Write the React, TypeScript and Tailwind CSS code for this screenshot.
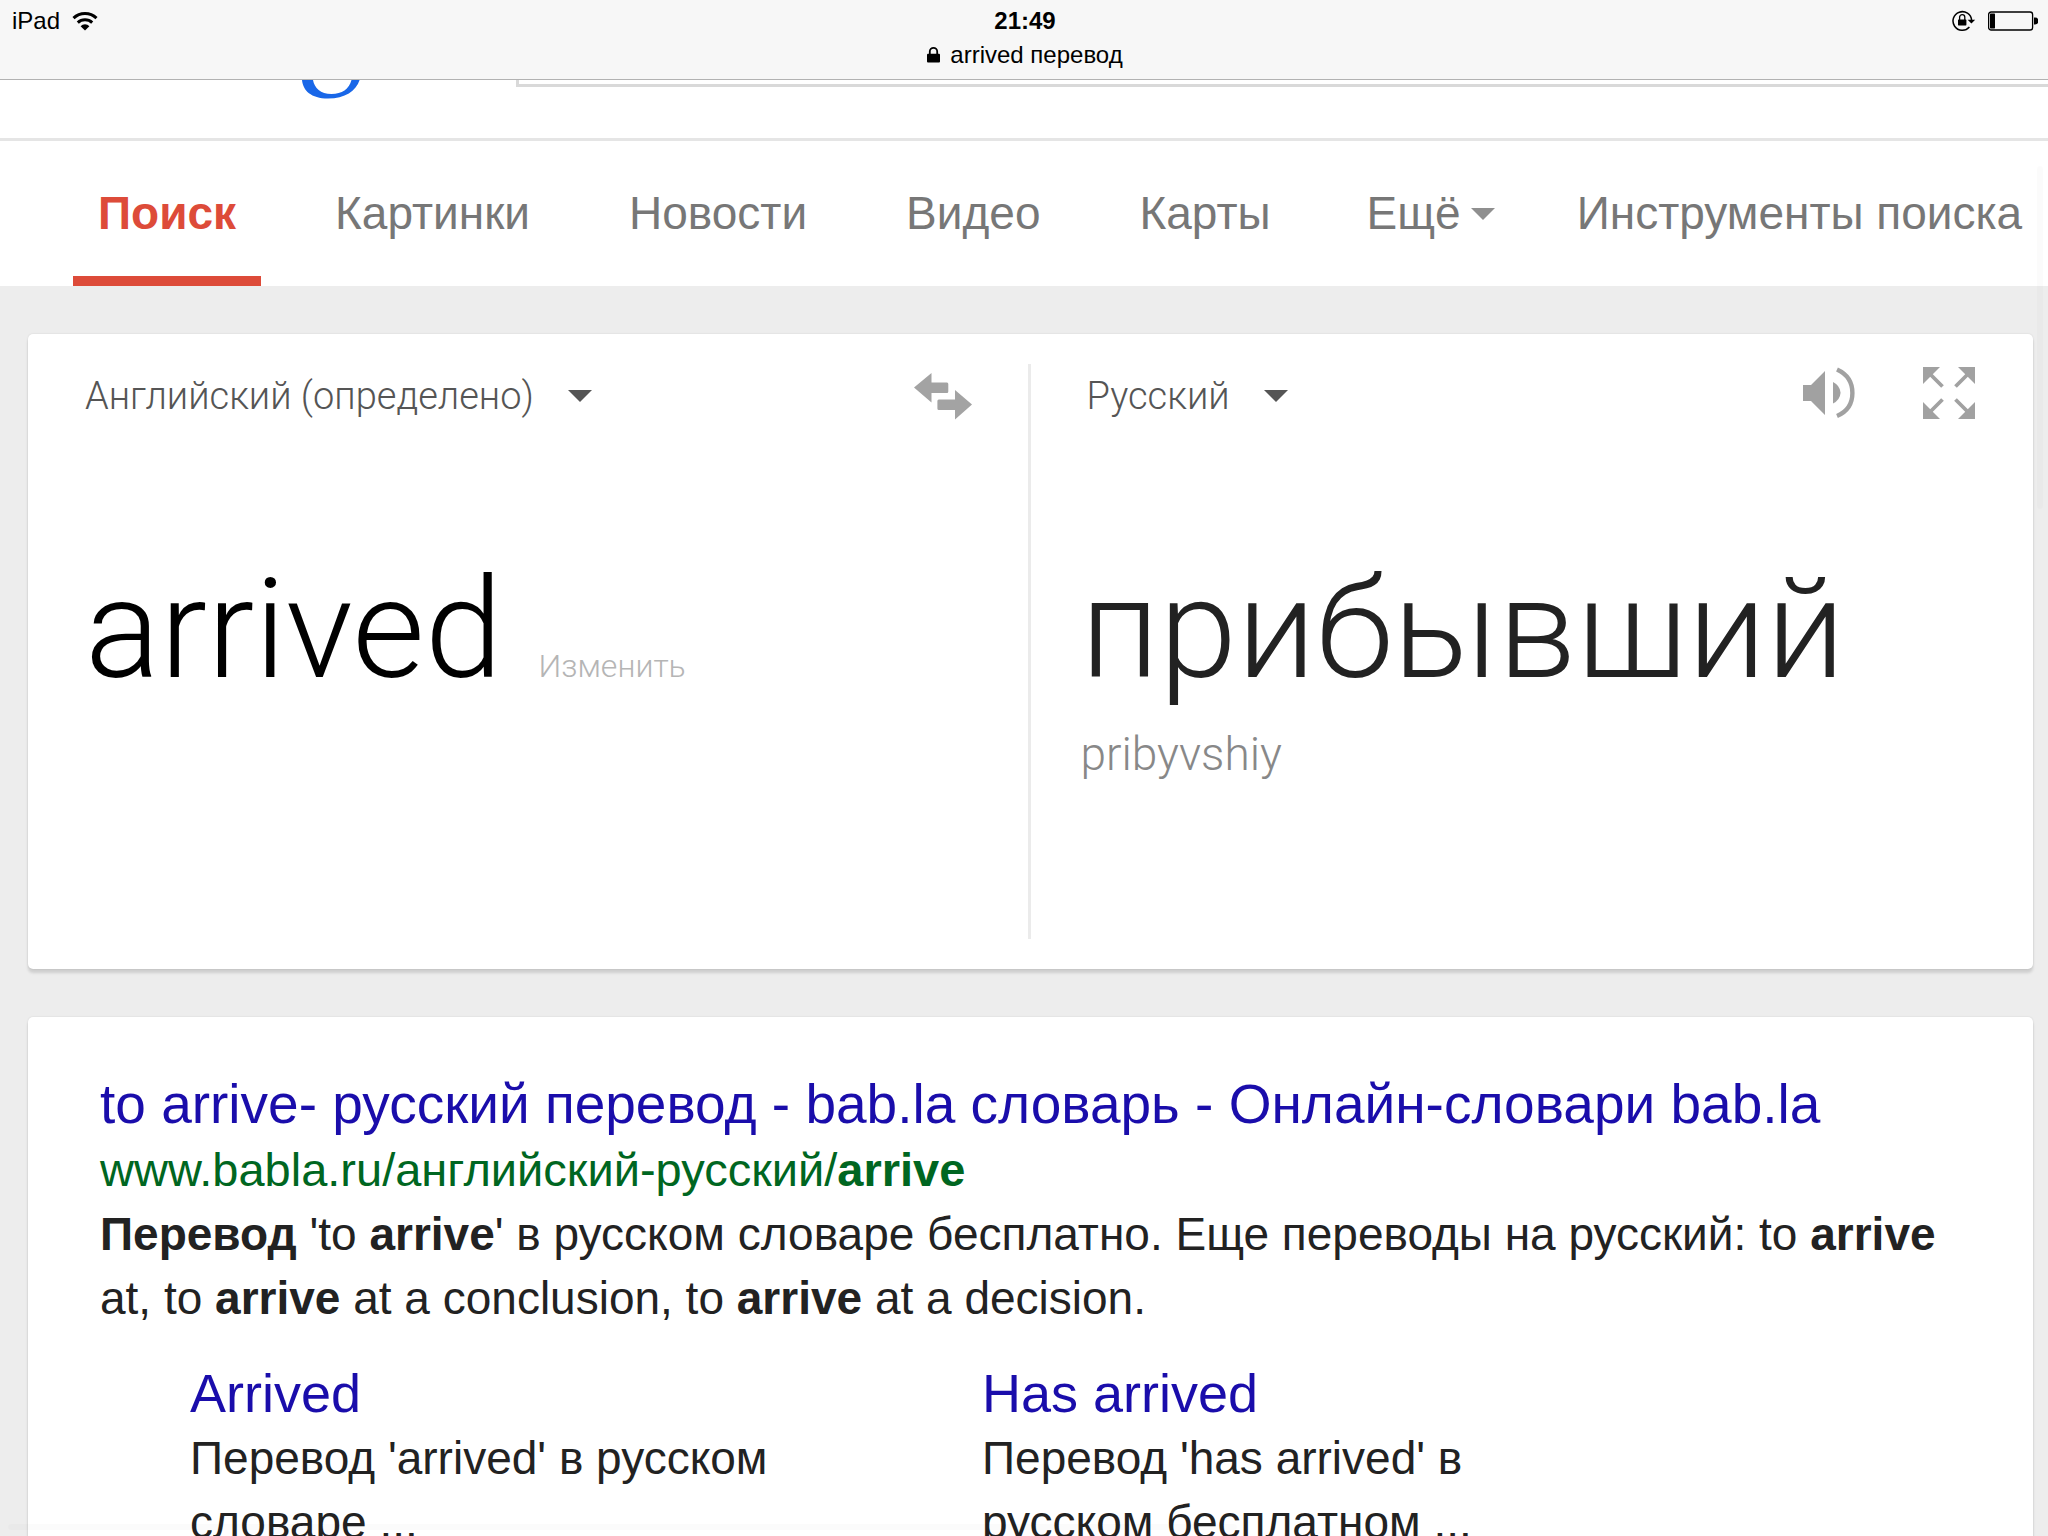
import type { ReactNode } from "react";

const body = "text-[46px] leading-16 text-[#222222]";

function Wifi() {
  return (
    <svg width="26" height="20" viewBox="0 0 26 20" fill="none" stroke="#000" strokeWidth="3" aria-hidden="true">
      <path d="M1.5 7.2A16.5 16.5 0 0 1 24.5 7.2" />
      <path d="M5.8 11.6A10.4 10.4 0 0 1 20.2 11.6" />
      <path d="M13 19.5L8.6 15.2A6.2 6.2 0 0 1 17.4 15.2Z" fill="#000" stroke="none" />
    </svg>
  );
}

function Padlock() {
  return (
    <svg width="13" height="16" viewBox="0 0 13 16" aria-hidden="true">
      <path d="M2.8 8V4.6A3.7 3.7 0 0 1 10.2 4.6V8" fill="none" stroke="#000" strokeWidth="1.8" />
      <rect x="0" y="6.8" width="13" height="8.7" rx="1" fill="#000" />
    </svg>
  );
}

function RotationLock() {
  return (
    <svg width="24" height="22" viewBox="0 0 24 22" aria-hidden="true">
      <path d="M19.6 10.4A9.3 9.3 0 1 0 17.4 17" fill="none" stroke="#000" strokeWidth="1.5" />
      <path d="M15.6 9.8H23.2L19.4 13.6Z" fill="#000" />
      <path d="M7.6 10V7.2A2.6 2.6 0 0 1 12.8 7.2V10" fill="none" stroke="#000" strokeWidth="1.3" />
      <rect x="6" y="9.4" width="8.4" height="6" rx="0.6" fill="#000" />
    </svg>
  );
}

function Battery() {
  return (
    <svg width="50" height="20" viewBox="0 0 50 20" aria-hidden="true">
      <rect x="0.6" y="1" width="44" height="18" rx="2.6" fill="none" stroke="#000" strokeWidth="1.3" />
      <rect x="2" y="2.6" width="5" height="14.8" rx="0.6" fill="#000" />
      <path d="M46 6.6H47A3.4 3.4 0 0 1 47 13.4H46Z" fill="#000" />
    </svg>
  );
}

function Caret() {
  return (
    <svg width="24" height="12" viewBox="0 0 24 12" fill="currentColor" aria-hidden="true">
      <path d="M0 0H24L12 12Z" />
    </svg>
  );
}

function SwapArrows() {
  return (
    <svg width="58" height="47" viewBox="0 0 58 47" fill="#a3a3a3" aria-hidden="true">
      <path d="M0 14.5L17.5 0V9.5H33Q34.3 9.5 34.3 11V18.5Q34.3 20 33 20H17.5V29.5Z" />
      <path d="M58 31.5L41 46.5V37H24.8Q23.4 37 23.4 35.5V28Q23.4 26.5 24.8 26.5H41V17Z" />
    </svg>
  );
}

function Speaker() {
  return (
    <svg width="52" height="52" viewBox="0 0 52 52" fill="#a1a1a1" aria-hidden="true">
      <path d="M0 18H8L22 4V48L8 34H0Z" />
      <path d="M30 15Q37 18.5 37.6 25.8Q37 33 30 36.6Z" />
      <path d="M34 2.5Q49.4 9.5 49.4 26T34 49" fill="none" stroke="#a1a1a1" strokeWidth="4.4" />
    </svg>
  );
}

function Expand() {
  return (
    <svg width="52" height="52" viewBox="0 0 52 52" fill="#a1a1a1" stroke="#a1a1a1" aria-hidden="true">
      <path stroke="none" d="M0 0H17L0 17ZM52 0V17L35 0ZM52 52H35L52 35ZM0 52V35L17 52Z" />
      <path fill="none" strokeWidth="3.8" d="M5 5L19.5 19.5M47 5L32.5 19.5M47 47L32.5 32.5M5 47L19.5 32.5" />
    </svg>
  );
}

function Card({ children }: { children: ReactNode }) {
  return (
    <section className="rounded-[5px] bg-white shadow-[0_4px_3px_rgba(0,0,0,0.13),0_0_2px_rgba(0,0,0,0.12)]">
      {children}
    </section>
  );
}

function LanguageSelect({ label, value }: { label: string; value: string }) {
  return (
    <label className="flex items-center gap-[34px] text-[#555555]">
      <select
        aria-label={label}
        className="field-sizing-content appearance-none bg-transparent p-0 font-['Roboto','Liberation_Sans',sans-serif] text-[38px] leading-[48px] font-light outline-none"
      >
        <option>{value}</option>
      </select>
      <Caret />
    </label>
  );
}

function Sitelink({ title, children }: { title: string; children: ReactNode }) {
  return (
    <div>
      <h4 className="mb-px text-[54px] leading-16 text-[#1a0dab]">
        <a href="#">{title}</a>
      </h4>
      <p className={body + " max-w-[610px]"}>{children}</p>
    </div>
  );
}

const tabs = ["Картинки", "Новости", "Видео", "Карты"];
const tab = "flex items-center border-b-10 pt-[10px] ";

export default function App() {
  return (
    <div className="relative flex h-screen flex-col overflow-hidden bg-[#ededed] font-['Liberation_Sans',Arial,sans-serif]">
      <header className="grid h-20 shrink-0 grid-cols-[1fr_auto_1fr] border-b border-[#b2b2b2] bg-[#f7f7f7] pt-[7px] pr-[10px] pl-3 text-[24px] leading-7 text-black">
        <div className="flex h-7 items-center gap-3">
          <span>iPad</span>
          <Wifi />
        </div>
        <div className="flex flex-col items-center gap-[6px]">
          <span className="font-bold">21:49</span>
          <span className="flex items-center gap-[10px]">
            <Padlock />
            arrived перевод
          </span>
        </div>
        <div className="flex h-7 items-center justify-end gap-3">
          <RotationLock />
          <Battery />
        </div>
      </header>

      <div className="flex h-[61px] shrink-0 items-start border-b-[3px] border-[#e5e5e5] bg-white pl-[302px]">
        <svg width="58" height="20" viewBox="0 0 58 20" role="img" aria-label="Google">
          <path
            d="M0 0C1 10.500 9 18.500 26 18.500C43 18.500 54 11 57.6 0H49.5C47 9 40 14 29.500 14C18.500 14 12.500 8 11 0Z"
            fill="#1967e8"
          />
        </svg>
        <input
          type="search"
          aria-label="Поиск"
          className="ml-[156px] h-[7px] min-w-0 flex-1 appearance-none border-b-[3px] border-l-[3px] border-[#d9d9d9] bg-white p-0 outline-none"
        />
      </div>

      <nav className="flex h-[145px] shrink-0 gap-[49px] bg-white pl-[73px] text-[46px] whitespace-nowrap text-[#777777]">
        <a href="#" aria-current="page" className={tab + "border-[#dd4b39] px-[25px] font-bold text-[#dd4b39]"}>
          Поиск
        </a>
        {tabs.map((t) => (
          <a key={t} href="#" className={tab + "border-transparent px-[25px]"}>
            {t}
          </a>
        ))}
        <button type="button" aria-haspopup="menu" className={tab + "gap-[10px] border-transparent pl-[22px]"}>
          Ещё
          <span className="text-[#8f8f8f]">
            <Caret />
          </span>
        </button>
        <button type="button" className={tab + "border-transparent pl-[33px]"}>
          Инструменты поиска
        </button>
      </nav>

      <main className="flex flex-col gap-12 pt-12 pr-[15px] pl-7">
        <Card>
          <div className="grid h-[635px] grid-cols-2 py-[30px] font-['Roboto','Liberation_Sans',sans-serif] font-light">
            <div className="flex flex-col border-r-[3px] border-[#ebebeb] pr-14 pl-[57px]">
              <div className="flex h-16 items-center justify-between">
                <LanguageSelect label="Исходный язык" value="Английский (определено)" />
                <button type="button" aria-label="Поменять языки местами">
                  <SwapArrows />
                </button>
              </div>
              <div className="flex items-baseline gap-9 pt-[126px]">
                <span className="text-[140px] leading-[150px] text-black">arrived</span>
                <a href="#" className="text-[32px] text-[#b5b5b5]">
                  Изменить
                </a>
              </div>
            </div>
            <div className="flex flex-col pr-[58px] pl-[50px]">
              <div className="flex h-16 items-center justify-between pl-[6px]">
                <LanguageSelect label="Язык перевода" value="Русский" />
                <div className="flex gap-[68px] self-start pt-[3px]">
                  <button type="button" aria-label="Прослушать">
                    <Speaker />
                  </button>
                  <button type="button" aria-label="Развернуть">
                    <Expand />
                  </button>
                </div>
              </div>
              <p className="pt-[126px] text-[140px] leading-[150px] text-[#222222]">прибывший</p>
              <p className="pt-[18px] text-[46px] leading-16 text-[#888888]">pribyvshiy</p>
            </div>
          </div>
        </Card>

        <Card>
          <article className="px-[72px] pt-[55px] pb-10">
            <h3 className="mb-[2px] text-[55px] leading-16 text-[#1a0dab]">
              <a href="#">to arrive- русский перевод - bab.la словарь - Онлайн-словари bab.la</a>
            </h3>
            <p className="text-[47px] leading-16 text-[#006621]">
              www.babla.ru/английский-русский/<b>arrive</b>
            </p>
            <p className={body + " pr-5"}>
              <b>Перевод</b> 'to <b>arrive</b>' в русском словаре бесплатно. Еще переводы на русский: to <b>arrive</b>{" "}
              at, to <b>arrive</b> at a conclusion, to <b>arrive</b> at a decision.
            </p>
            <div className="grid grid-cols-[792px_1fr] pt-[31px] pl-[90px]">
              <Sitelink title="Arrived">Перевод 'arrived' в русском словаре ...</Sitelink>
              <Sitelink title="Has arrived">Перевод 'has arrived' в русском бесплатном ...</Sitelink>
            </div>
          </article>
        </Card>
      </main>

      {/* Fading scroll indicators */}
      <div className="absolute top-[166px] right-[5px] h-[343px] w-[6px] rounded-full bg-black/[0.015]" />
      <div className="absolute bottom-[6px] left-2 h-[6px] w-3/5 rounded-full bg-black/[0.015]" />
    </div>
  );
}
